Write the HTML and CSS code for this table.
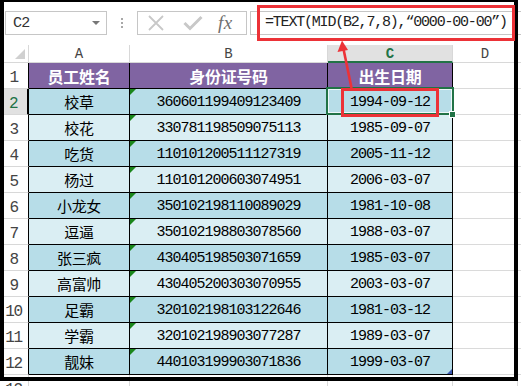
FILE: index.html
```html
<!DOCTYPE html>
<html lang="zh-CN">
<head>
<meta charset="utf-8">
<title>TEXT MID</title>
<link rel="stylesheet" href="styles.css">
</head>
<body>
<div class="fbar">
  <div class="namebox"><span>C2</span><i class="caret"></i></div>
  <div class="grip"><i></i><i></i><i></i></div>
  <div class="btns">
    <svg class="ic-x" width="18" height="16" viewBox="0 0 18 16"><path d="M2 1 L16 15 M16 1 L2 15" stroke="#c8c8c8" stroke-width="1.8" fill="none"/></svg>
    <svg class="ic-ok" width="20" height="16" viewBox="0 0 20 16"><path d="M1.5 8 L7 13.5 L18.5 2" stroke="#c8c8c8" stroke-width="3" fill="none"/></svg>
    <span class="fx">fx</span>
  </div>
  <div class="formula">=TEXT(MID(B2,7,8),“0000-00-00”)</div>
</div>

<div class="sheet">
  <div class="c corner"><i></i></div>
  <div class="c ch">A</div><div class="c ch">B</div><div class="c ch chs">C</div><div class="c ch">D</div><div class="c ch ce"></div>

  <div class="c rh tb">1</div><div class="c t hd">员工姓名</div><div class="c t hd">身份证号码</div><div class="c t hd">出生日期</div><div class="c g"></div><div class="c ge"></div>

  <div class="c rh tb rhs">2</div><div class="c t dk nm">校草</div><div class="c t dk id">360601199409123409</div><div class="c t dk dt sel">1994-09-12</div><div class="c g"></div><div class="c ge"></div>
  <div class="c rh tb">3</div><div class="c t lt nm">校花</div><div class="c t lt id">330781198509075113</div><div class="c t lt dt">1985-09-07</div><div class="c g"></div><div class="c ge"></div>
  <div class="c rh tb">4</div><div class="c t dk nm">吃货</div><div class="c t dk id">110101200511127319</div><div class="c t dk dt">2005-11-12</div><div class="c g"></div><div class="c ge"></div>
  <div class="c rh tb">5</div><div class="c t lt nm">杨过</div><div class="c t lt id">110101200603074951</div><div class="c t lt dt">2006-03-07</div><div class="c g"></div><div class="c ge"></div>
  <div class="c rh tb">6</div><div class="c t dk nm">小龙女</div><div class="c t dk id">350102198110089029</div><div class="c t dk dt">1981-10-08</div><div class="c g"></div><div class="c ge"></div>
  <div class="c rh tb">7</div><div class="c t lt nm">逗逼</div><div class="c t lt id">350102198803078560</div><div class="c t lt dt">1988-03-07</div><div class="c g"></div><div class="c ge"></div>
  <div class="c rh tb">8</div><div class="c t dk nm">张三疯</div><div class="c t dk id">430405198503071659</div><div class="c t dk dt">1985-03-07</div><div class="c g"></div><div class="c ge"></div>
  <div class="c rh tb">9</div><div class="c t lt nm">高富帅</div><div class="c t lt id">430405200303070955</div><div class="c t lt dt">2003-03-07</div><div class="c g"></div><div class="c ge"></div>
  <div class="c rh tb">10</div><div class="c t dk nm">足霸</div><div class="c t dk id">320102198103122646</div><div class="c t dk dt">1981-03-12</div><div class="c g"></div><div class="c ge"></div>
  <div class="c rh tb">11</div><div class="c t lt nm">学霸</div><div class="c t lt id">320102198903077287</div><div class="c t lt dt">1989-03-07</div><div class="c g"></div><div class="c ge"></div>
  <div class="c rh tb">12</div><div class="c t dk nm">靓妹</div><div class="c t dk id">440103199903071836</div><div class="c t dk dt last">1999-03-07</div><div class="c g"></div><div class="c ge"></div>

  <div class="c rh">13</div><div class="c g"></div><div class="c g"></div><div class="c g"></div><div class="c g"></div><div class="c ge"></div>
</div>

<div class="frame"></div>
<div class="redbox rb1"></div>
<div class="redbox rb2"></div>
<svg class="arrow" width="521" height="386" viewBox="0 0 521 386">
  <line x1="351.5" y1="88" x2="343.5" y2="49" stroke="#ec3237" stroke-width="2.6"/>
  <polygon points="342,40.5 337.5,52 348,50" fill="#ec3237"/>
</svg>
</body>
</html>
```

FILE: styles.css
```css
html, body {
  margin: 0;
  padding: 0;
}
body {
  width: 521px;
  height: 386px;
  overflow: hidden;
  background: #fff;
  position: relative;
  font-family: "Liberation Mono", monospace;
  color: #000;
}

/* formula bar */
.fbar {
  display: flex;
  align-items: flex-start;
  height: 45px;
  padding-top: 11px;
  box-sizing: border-box;
}
.namebox {
  margin-left: 5px;
  width: 102px;
  height: 24px;
  box-sizing: border-box;
  border: 1px solid #c6c6c6;
  display: flex;
  align-items: center;
  padding-left: 7px;
  font-size: 15px;
  letter-spacing: -0.8px;
  color: #333;
}
.caret {
  margin-left: auto;
  margin-right: 6px;
  width: 0;
  height: 0;
  border-left: 4px solid transparent;
  border-right: 4px solid transparent;
  border-top: 4px solid #777;
}
.grip {
  width: 30px;
  height: 24px;
  display: flex;
  flex-direction: column;
  align-items: center;
  justify-content: center;
  gap: 2px;
}
.grip i {
  display: block;
  width: 2px;
  height: 2px;
  background: #a8a8a8;
}
.btns {
  width: 110px;
  height: 24px;
  box-sizing: border-box;
  border: 1px solid #c6c6c6;
  display: flex;
  align-items: center;
}
.ic-x { margin-left: 9px; }
.ic-ok { margin-left: 18px; }
.fx {
  margin-left: 15px;
  font-family: "Liberation Serif", serif;
  font-style: italic;
  font-size: 19px;
  color: #6f6f6f;
  letter-spacing: 0.5px;
  line-height: 20px;
}
.formula {
  margin-left: 3px;
  flex: 1;
  height: 24px;
  box-sizing: border-box;
  border: 1px solid #c6c6c6;
  border-right: none;
  padding-left: 14px;
  font-size: 15px;
  letter-spacing: -1.2px;
  line-height: 22px;
  color: #222;
  white-space: nowrap;
}

/* sheet */
.sheet {
  display: grid;
  grid-template-columns: 29px 101px 198px 125px 65px 1fr;
  grid-template-rows: 18px;
  grid-auto-rows: 26px;
}
.c {
  box-sizing: border-box;
  border-right: 1px solid #d8d8d8;
  border-bottom: 1px solid #d8d8d8;
  display: flex;
  align-items: center;
  justify-content: center;
  white-space: nowrap;
}
.corner {
  justify-content: flex-end;
  align-items: flex-end;
  padding: 0 3px 3px 0;
}
.corner i {
  width: 0;
  height: 0;
  border-left: 10px solid transparent;
  border-bottom: 10px solid #d0d0d0;
}
.ch {
  font-size: 14px;
  color: #444;
  padding-top: 1px;
}
.chs {
  background: #e1e1e1;
  color: #217346;
  font-weight: bold;
  border-bottom: 2px solid #217346;
}
.ce { border-right: none; }
.rh {
  align-items: flex-end;
  padding-bottom: 1px;
  font-size: 16px;
  letter-spacing: -1.4px;
  color: #444;
  padding-right: 1px;
}
.rh.tb { border-right-color: #000; }
.rhs {
  background: #e1e1e1;
  color: #217346;
  border-right: 2px solid #217346;
}
.g { border-right-color: #dadada; border-bottom-color: #dadada; }
.ge { border-right: none; border-bottom-color: #dadada; }

.t {
  border-right-color: #000;
  border-bottom-color: #000;
}
.hd {
  background: #8064a2;
  color: #fff;
  font-family: "Noto Sans CJK SC", sans-serif;
  font-weight: bold;
  font-size: 16px;
  letter-spacing: -0.3px;
}
.dk { background: #b7dde8; }
.lt { background: #daeef3; }
.nm {
  font-family: "Noto Sans CJK SC", sans-serif;
  font-size: 15px;
  letter-spacing: -0.3px;
}
.id, .dt {
  font-size: 15px;
  letter-spacing: -1px;
  padding-top: 1px;
}
.id { position: relative; }
.id::before {
  content: "";
  position: absolute;
  left: 0;
  top: 0;
  width: 0;
  height: 0;
  border-top: 6px solid #1a861a;
  border-right: 6px solid transparent;
}
.sel { position: relative; }
.sel::after {
  content: "";
  position: absolute;
  left: -2px;
  top: -2px;
  right: -2px;
  bottom: -1px;
  border: 2px solid #217346;
  box-shadow: inset 0 0 0 1px #eef7f9;
  z-index: 2;
}
.sel::before {
  content: "";
  position: absolute;
  right: -4px;
  bottom: -4px;
  width: 5px;
  height: 5px;
  background: #217346;
  border: 1px solid #fff;
  z-index: 3;
}
.last { position: relative; }
.last::after {
  content: "";
  position: absolute;
  right: 0;
  bottom: 0;
  width: 0;
  height: 0;
  border-left: 5px solid transparent;
  border-bottom: 5px solid #3b57b0;
}

/* annotations */
.frame {
  position: absolute;
  left: 0;
  top: 0;
  width: 518px;
  height: 381px;
  box-sizing: border-box;
  border: 4px solid #000;
  border-top-width: 2px;
  z-index: 5;
}
.redbox {
  position: absolute;
  box-sizing: border-box;
  border: 3px solid #ec3237;
  z-index: 6;
}
.rb1 { left: 257px; top: 5px; width: 258px; height: 36px; }
.rb2 { left: 341px; top: 88px; width: 98px; height: 29px; }
.arrow {
  position: absolute;
  left: 0;
  top: 0;
  z-index: 7;
}
```
